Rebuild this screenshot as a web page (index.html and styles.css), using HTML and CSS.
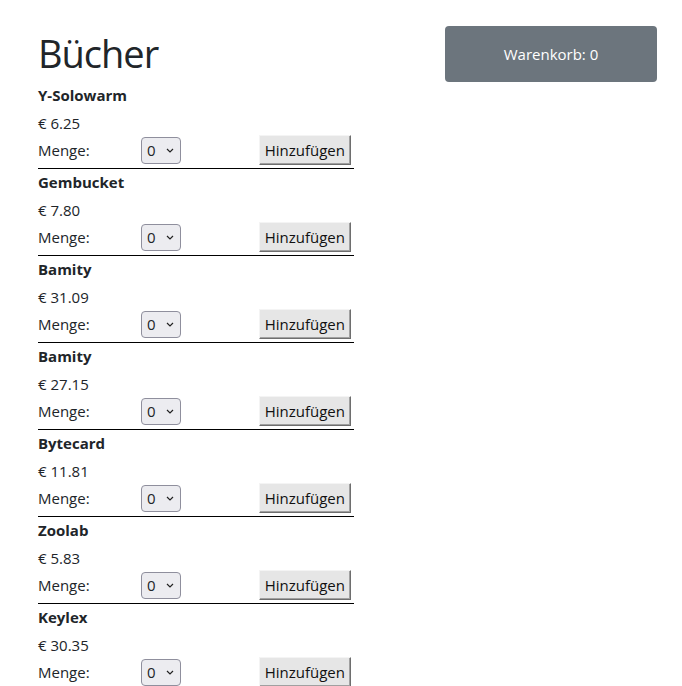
FILE: index.html
```html
<!DOCTYPE html>
<html lang="de">
<head>
<meta charset="utf-8">
<title>Bücher</title>
<link rel="stylesheet" href="styles.css">
</head>
<body>
<div class="page">
  <main class="main">
    <h1 class="title">Bücher</h1>

    <div class="product">
      <div class="name">Y-Solowarm</div>
      <div class="price">€ 6.25</div>
      <div class="qty-row">
        <span class="label">Menge:</span>
        <span class="select-wrap"><select class="qty"><option>0</option></select><svg class="chev" width="8" height="5" viewBox="0 0 8 5"><path d="M1 1l3 3 3-3" fill="none" stroke="#222" stroke-width="1.2"/></svg></span>
        <button class="add">Hinzufügen</button>
      </div>
    </div>

    <div class="product">
      <div class="name">Gembucket</div>
      <div class="price">€ 7.80</div>
      <div class="qty-row">
        <span class="label">Menge:</span>
        <span class="select-wrap"><select class="qty"><option>0</option></select><svg class="chev" width="8" height="5" viewBox="0 0 8 5"><path d="M1 1l3 3 3-3" fill="none" stroke="#222" stroke-width="1.2"/></svg></span>
        <button class="add">Hinzufügen</button>
      </div>
    </div>

    <div class="product">
      <div class="name">Bamity</div>
      <div class="price">€ 31.09</div>
      <div class="qty-row">
        <span class="label">Menge:</span>
        <span class="select-wrap"><select class="qty"><option>0</option></select><svg class="chev" width="8" height="5" viewBox="0 0 8 5"><path d="M1 1l3 3 3-3" fill="none" stroke="#222" stroke-width="1.2"/></svg></span>
        <button class="add">Hinzufügen</button>
      </div>
    </div>

    <div class="product">
      <div class="name">Bamity</div>
      <div class="price">€ 27.15</div>
      <div class="qty-row">
        <span class="label">Menge:</span>
        <span class="select-wrap"><select class="qty"><option>0</option></select><svg class="chev" width="8" height="5" viewBox="0 0 8 5"><path d="M1 1l3 3 3-3" fill="none" stroke="#222" stroke-width="1.2"/></svg></span>
        <button class="add">Hinzufügen</button>
      </div>
    </div>

    <div class="product">
      <div class="name">Bytecard</div>
      <div class="price">€ 11.81</div>
      <div class="qty-row">
        <span class="label">Menge:</span>
        <span class="select-wrap"><select class="qty"><option>0</option></select><svg class="chev" width="8" height="5" viewBox="0 0 8 5"><path d="M1 1l3 3 3-3" fill="none" stroke="#222" stroke-width="1.2"/></svg></span>
        <button class="add">Hinzufügen</button>
      </div>
    </div>

    <div class="product">
      <div class="name">Zoolab</div>
      <div class="price">€ 5.83</div>
      <div class="qty-row">
        <span class="label">Menge:</span>
        <span class="select-wrap"><select class="qty"><option>0</option></select><svg class="chev" width="8" height="5" viewBox="0 0 8 5"><path d="M1 1l3 3 3-3" fill="none" stroke="#222" stroke-width="1.2"/></svg></span>
        <button class="add">Hinzufügen</button>
      </div>
    </div>

    <div class="product">
      <div class="name">Keylex</div>
      <div class="price">€ 30.35</div>
      <div class="qty-row">
        <span class="label">Menge:</span>
        <span class="select-wrap"><select class="qty"><option>0</option></select><svg class="chev" width="8" height="5" viewBox="0 0 8 5"><path d="M1 1l3 3 3-3" fill="none" stroke="#222" stroke-width="1.2"/></svg></span>
        <button class="add">Hinzufügen</button>
      </div>
    </div>
  </main>

  <aside class="side">
    <button class="cart">Warenkorb: 0</button>
  </aside>
</div>
</body>
</html>
```

FILE: styles.css
```css
html, body {
  margin: 0;
  background: #fff;
}

body {
  font-family: "Open Sans", "Noto Sans", "DejaVu Sans", sans-serif;
  font-size: 15px;
  color: #212529;
}

.page {
  display: flex;
  align-items: flex-start;
  padding: 26px 25px 0 38px;
}

.main {
  width: 316px;
}

.title {
  font-size: 38px;
  font-weight: 400;
  letter-spacing: -1px;
  line-height: 48px;
  margin: 0 0 5px;
  padding-top: 3px;
}

.product {
  border-bottom: 1px solid #000;
  padding-top: 1px;
  padding-bottom: 3px;
}

.name {
  font-weight: 700;
  line-height: 24px;
}

.price {
  line-height: 24px;
  margin-top: 4px;
}

.qty-row {
  display: flex;
  align-items: center;
  height: 30px;
}

.label {
  width: 103px;
  line-height: 24px;
}

.select-wrap {
  position: relative;
  display: inline-block;
  height: 27px;
}

.qty {
  -webkit-appearance: none;
  appearance: none;
  width: 40px;
  height: 27px;
  box-sizing: border-box;
  border: 1px solid #8f8f9d;
  border-radius: 4px;
  background: #ececf0;
  font: inherit;
  color: #212529;
  padding: 0 0 0 5px;
  margin: 0;
}

.chev {
  position: absolute;
  left: 25px;
  top: 11px;
  pointer-events: none;
}

.add {
  margin-left: auto;
  margin-right: 3px;
  height: 30px;
  box-sizing: border-box;
  padding: 0 5px;
  font: inherit;
  color: #111;
  background: #e6e6e6;
  border: 1px solid;
  border-color: #f4f4f4 #6e6e6e #6e6e6e #f4f4f4;
  box-shadow: inset -1px -1px 0 #a0a0a0;
  border-radius: 0;
}

.side {
  margin-left: auto;
  width: 212px;
}

.cart {
  display: block;
  width: 100%;
  height: 56px;
  border: 0;
  border-radius: 4px;
  background: #6c757d;
  color: #fff;
  font: inherit;
  font-size: 15px;
}
```
